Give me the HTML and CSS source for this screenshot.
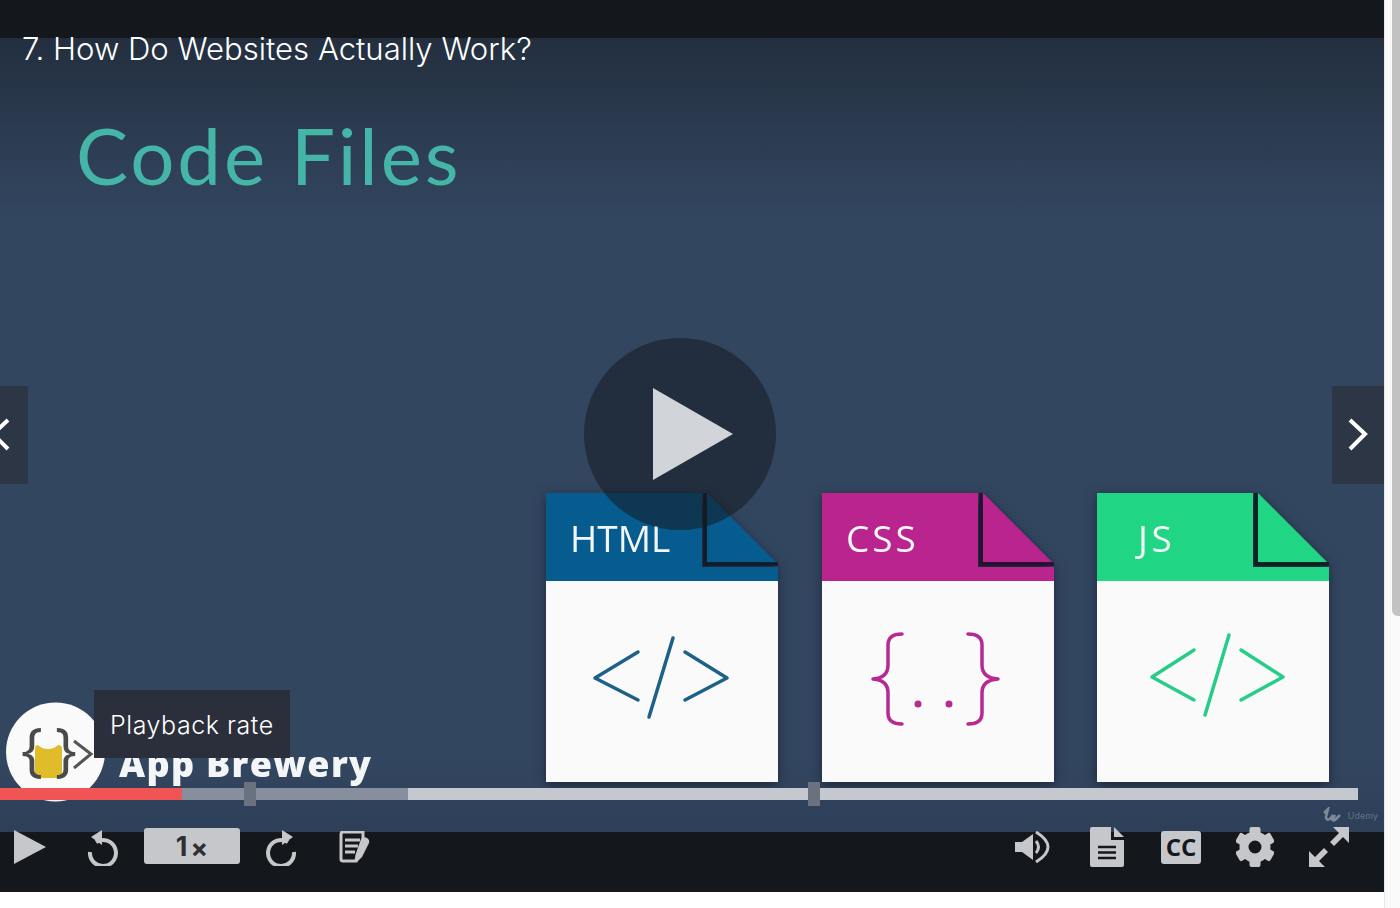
FILE: index.html
```html
<!DOCTYPE html>
<html lang="en">
<head>
	<meta charset="UTF-8">
	<title>How Do Websites Actually Work?</title>
	<link rel="stylesheet" href="styles.css">
</head>
<body>
	<div class="page">
		<div class="main">
			<div class="player">
				<div class="top-bar"></div>
				<div class="stage">
					<div class="slide">
						<div class="slide-title">Code Files</div>
						<div class="slide-bottom">
							<div class="brand">
								<svg class="brand-logo" width="100" height="100" viewBox="0 0 100 100">
									<circle cx="49.500" cy="50" r="49.500" fill="#fafafa"/>
									<path d="M29 47Q29 43 32 43Q36 47 42 47Q48 47 52 43Q56 43 56 47V72Q56 76 52 76H33Q29 76 29 72Z" fill="#dfbd2a"/>
									<text class="logo-sign" x="15" y="68">{</text>
									<text class="logo-sign" x="49" y="68">}</text>
									<path d="M68 39l17 13-17 14" fill="none" stroke="#555" stroke-width="3"/>
								</svg>
								<span class="brand-name">App Brewery</span>
							</div>
							<div class="files">
								<svg class="file" width="232" height="289" viewBox="0 0 232 289">
									<rect y="88" width="232" height="201" fill="#fafafa"/>
									<path d="M0 0H156V74H232V88H0Z" fill="#065c8f"/>
									<path d="M161 0L230 69H161Z" fill="#065c8f"/>
									<path d="M159 0V71H232" fill="none" stroke="#111c2b" stroke-width="3.500"/>
									<text class="file-label" x="24" y="59">HTML</text>
									<path class="code-mark" d="M92 159L49 185L92 207M127 145L103 224M139 159L181 185L139 207" stroke="#1d6088"/>
								</svg>
								<svg class="file" width="232" height="289" viewBox="0 0 232 289">
									<rect y="88" width="232" height="201" fill="#fafafa"/>
									<path d="M0 0H156V74H232V88H0Z" fill="#b9248f"/>
									<path d="M161 0L230 69H161Z" fill="#b9248f"/>
									<path d="M159 0V71H232" fill="none" stroke="#2a1030" stroke-width="3.500"/>
									<text class="file-label file-label-css" x="24" y="59">CSS</text>
									<path class="code-mark" d="M80 141Q66 141 66 152V172Q66 185 51 186Q66 187 66 200V220Q66 231 80 231M146 141Q160 141 160 152V172Q160 185 176 186Q160 187 160 200V220Q160 231 146 231" stroke="#b72a94"/>
									<circle cx="96" cy="211" r="3.500" fill="#b72a94"/>
									<circle cx="127" cy="211" r="3.500" fill="#b72a94"/>
								</svg>
								<svg class="file" width="232" height="289" viewBox="0 0 232 289">
									<rect y="88" width="232" height="201" fill="#fafafa"/>
									<path d="M0 0H156V74H232V88H0Z" fill="#20d685"/>
									<path d="M161 0L230 69H161Z" fill="#20d685"/>
									<path d="M159 0V71H232" fill="none" stroke="#0b2420" stroke-width="3.500"/>
									<text class="file-label file-label-js" x="41" y="59">JS</text>
									<path class="code-mark" d="M97 157L55 184L97 207M132 142L108 222M144 157L186 184L144 207" stroke="#26cc87"/>
								</svg>
							</div>
						</div>
					</div>

					<div class="lecture-title">7. How Do Websites Actually Work?</div>

					<div class="big-play">
						<svg width="80" height="92" viewBox="0 0 80 92"><path d="M0 0L80 46L0 92Z" fill="#d1d4d9"/></svg>
					</div>

					<div class="nav-arrow nav-prev">
						<svg width="28" height="98" viewBox="0 0 28 98"><path d="M8 34L-7 48L8 63" fill="none" stroke="#fff" stroke-width="4"/></svg>
					</div>
					<div class="nav-arrow nav-next">
						<svg width="52" height="98" viewBox="0 0 52 98"><path d="M18 34L33 48L18 63" fill="none" stroke="#fff" stroke-width="4"/></svg>
					</div>

					<div class="tooltip">Playback rate</div>

					<div class="progress">
						<div class="progress-buffer"></div>
						<div class="progress-played"></div>
						<div class="marker marker-a"></div>
						<div class="marker marker-b"></div>
					</div>

					<div class="watermark">
						<svg width="20" height="16" viewBox="0 0 20 16"><path d="M1 6L5 2L3 10Q3 14 7 12L10 8L9 12Q10 15 13 12L17 8M12 8L10 12" fill="none" stroke="#7e8896" stroke-width="2.500"/></svg>
						<span>Udemy</span>
					</div>
				</div>

				<div class="controls">
					<div class="control-group">
						<div class="btn btn-play">
							<svg width="32" height="34" viewBox="0 0 32 34"><path d="M0 0L32 17L0 34Z" fill="#c6c7cb"/></svg>
						</div>
						<div class="btn">
							<svg width="34" height="38" viewBox="0 0 34 38">
								<path d="M10 14A13 13 0 1 1 4 24" fill="none" stroke="#c6c7cb" stroke-width="4"/>
								<path d="M16 2V17L5 9Z" fill="#c6c7cb"/>
							</svg>
						</div>
						<div class="speed"><span class="speed-num">1</span><span class="speed-x">×</span></div>
						<div class="btn">
							<svg width="34" height="38" viewBox="0 0 34 38">
								<path d="M24 14A13 13 0 1 0 30 24" fill="none" stroke="#c6c7cb" stroke-width="4"/>
								<path d="M18 2V17L29 9Z" fill="#c6c7cb"/>
							</svg>
						</div>
						<div class="btn">
							<svg width="32" height="32" viewBox="0 0 32 32">
								<path d="M2 3Q2 1 4 1H24V7L18 24L17 30H4Q2 30 2 28Z" fill="none" stroke="#c6c7cb" stroke-width="3"/>
								<path d="M6 9H21M6 15H19M6 21H16" stroke="#c6c7cb" stroke-width="3"/>
								<path d="M23 8Q25 5 28 7Q31 9 30 12L23 26L18 31L18 23Z" fill="#c6c7cb"/>
							</svg>
						</div>
					</div>
					<div class="control-group">
						<div class="btn">
							<svg width="36" height="32" viewBox="0 0 36 32">
								<path d="M0 11H7L18 3V29L7 21H0Z" fill="#c6c7cb"/>
								<path d="M21 10Q26 16 21 22" fill="none" stroke="#c6c7cb" stroke-width="3"/>
								<path d="M21 1Q45 16 21 31" fill="none" stroke="#c6c7cb" stroke-width="3"/>
							</svg>
						</div>
						<div class="btn">
							<svg width="34" height="40" viewBox="0 0 34 40">
								<path d="M2 0H21V13H34V38Q34 40 32 40H2Q0 40 0 38V2Q0 0 2 0Z" fill="#c6c7cb"/>
								<path d="M24 0L34 10H24Z" fill="#c6c7cb"/>
								<path d="M8 20H26M8 25.500H26M8 31H26" stroke="#14171c" stroke-width="2.500"/>
							</svg>
						</div>
						<div class="btn">
							<svg width="40" height="33" viewBox="0 0 40 33">
								<rect width="40" height="33" rx="3" fill="#c6c7cb"/>
								<text class="cc-text" x="20" y="25">CC</text>
							</svg>
						</div>
						<div class="btn">
							<svg width="38" height="40" viewBox="-19 -20 38 40">
								<rect x="-5.500" y="-20" width="11" height="10" rx="2" fill="#c6c7cb"/>
								<rect x="-5.500" y="-20" width="11" height="10" rx="2" fill="#c6c7cb" transform="rotate(60)"/>
								<rect x="-5.500" y="-20" width="11" height="10" rx="2" fill="#c6c7cb" transform="rotate(120)"/>
								<rect x="-5.500" y="-20" width="11" height="10" rx="2" fill="#c6c7cb" transform="rotate(180)"/>
								<rect x="-5.500" y="-20" width="11" height="10" rx="2" fill="#c6c7cb" transform="rotate(240)"/>
								<rect x="-5.500" y="-20" width="11" height="10" rx="2" fill="#c6c7cb" transform="rotate(300)"/>
								<circle r="11" fill="none" stroke="#c6c7cb" stroke-width="9"/>
							</svg>
						</div>
						<div class="btn">
							<svg width="40" height="40" viewBox="0 0 40 40">
								<path d="M24 0H40V16L34 10L25 19L21 15L30 6Z" fill="#c6c7cb"/>
								<path d="M16 40H0V24L6 30L15 21L19 25L10 34Z" fill="#c6c7cb"/>
							</svg>
						</div>
					</div>
				</div>
			</div>
		</div>
		<div class="scrollbar"><div class="scroll-thumb"></div></div>
	</div>
</body>
</html>
```

FILE: styles.css
```css
*{margin: 0;padding: 0;box-sizing: border-box;}
html,body{height: 100%;overflow: hidden;background: #fff;}
body{font-family: Inter, "Liberation Sans", sans-serif;}

.page{
	display: flex;
	height: 908px;
}
.main{
	flex: 1;
	min-width: 0;
}
.player{
	display: flex;
	flex-direction: column;
	height: 892px;
}
.top-bar{
	height: 38px;
	background: #14171c;
}

/* video */
.stage{
	position: relative;
	flex: 1;
	background: linear-gradient(#232f3f, #334660 180px, #334660 720px, #2e3f58);
}
.slide{
	display: flex;
	flex-direction: column;
	height: 100%;
	padding: 71px 55px 50px 0;
	filter: blur(.7px);
}
.slide-title{
	margin-left: 76px;
	font-family: Lato, sans-serif;
	font-size: 78px;
	font-weight: 400;
	letter-spacing: 2.900px;
	line-height: 92px;
	color: #45b5a8;
}
.slide-bottom{
	display: flex;
	justify-content: space-between;
	align-items: flex-end;
	margin-top: auto;
}
.brand{
	display: flex;
	align-items: flex-end;
	margin: 0 0 -20px 6px;
}
.brand-logo{
	flex: none;
}
.logo-sign{
	font-family: "Open Sans", sans-serif;
	font-size: 58px;
	fill: #4a4a4a;
}
.brand-name{
	margin: 0 0 13px 13px;
	font-family: "Open Sans", sans-serif;
	font-size: 36px;
	font-weight: 800;
	letter-spacing: 1.300px;
	line-height: 50px;
	color: #f4f5f6;
}
.files{
	display: flex;
	gap: 43.500px;
}
.file{
	filter: drop-shadow(0 3px 6px rgba(10,15,25,.55));
}
.file-label{
	font-family: "Open Sans", sans-serif;
	font-size: 37px;
	font-weight: 400;
	fill: #f2f6f8;
}
.file-label-css{
	letter-spacing: 3px;
}
.file-label-js{
	letter-spacing: 3.500px;
}
.code-mark{
	fill: none;
	stroke-width: 3.500;
	stroke-linecap: round;
	stroke-linejoin: round;
}

/* overlays */
.lecture-title{
	position: absolute;
	top: -7px;
	left: 22px;
	font-size: 31.100px;
	font-weight: 300;
	line-height: 36px;
	color: #fff;
}
.big-play{
	position: absolute;
	top: 300px;
	left: 584px;
	display: flex;
	align-items: center;
	justify-content: center;
	width: 192px;
	height: 192px;
	padding-left: 26px;
	border-radius: 50%;
	background: rgba(20,25,33,.55);
}
.nav-arrow{
	position: absolute;
	top: 348px;
	height: 98px;
	background: #2c3645;
	overflow: hidden;
}
.nav-arrow svg{
	display: block;
	overflow: visible;
}
.nav-prev{
	left: 0;
	width: 28px;
}
.nav-next{
	right: 0;
	width: 52px;
}
.tooltip{
	position: absolute;
	top: 652px;
	left: 94px;
	width: 196px;
	padding: 0 16px;
	height: 68px;
	font-size: 25px;
	font-weight: 300;
	letter-spacing: .550px;
	line-height: 70px;
	color: #fff;
	background: #2a2f3b;
}
.progress{
	position: absolute;
	top: 750px;
	left: 0;
	width: 1358px;
	height: 12px;
	background: #c5c8ce;
}
.progress-buffer{
	position: absolute;
	top: 0;
	left: 0;
	width: 408px;
	height: 12px;
	background: #878f9f;
}
.progress-played{
	position: absolute;
	top: 0;
	left: 0;
	width: 182px;
	height: 12px;
	background: #f05455;
}
.marker{
	position: absolute;
	top: -6px;
	width: 12px;
	height: 24px;
	background: #6a7280;
}
.marker-a{left: 244px;}
.marker-b{left: 808px;}
.watermark{
	position: absolute;
	top: 769px;
	right: 6px;
	display: flex;
	align-items: center;
	gap: 5px;
	font-size: 9px;
	color: #66748a;
	filter: blur(.6px);
}

/* control bar */
.controls{
	position: relative;
	display: flex;
	justify-content: space-between;
	align-items: flex-start;
	height: 60px;
	padding-right: 18px;
	background: #14171c;
}
.control-group{
	display: flex;
	align-items: center;
	height: 30px;
}
.btn{
	display: flex;
	align-items: center;
	justify-content: center;
	width: 74px;
	height: 30px;
}
.btn svg{
	flex: none;
}
.btn-play{
	margin-left: -7px;
	margin-right: -1px;
}
.speed{
	display: flex;
	align-items: center;
	justify-content: center;
	flex: none;
	width: 96px;
	height: 36px;
	margin: -2px 4px 0;
	border-radius: 3px;
	font-weight: 700;
	color: #2c2f36;
	background: #c6c7cb;
}
.speed-num{
	font-size: 27px;
}
.speed-x{
	margin: 6px 0 0 3px;
	font-size: 26px;
	line-height: 24px;
}
.cc-text{
	font-family: "Open Sans", sans-serif;
	font-size: 24px;
	font-weight: 700;
	text-anchor: middle;
	fill: #14171c;
}

.scrollbar{
	flex: none;
	width: 16px;
	background: #fafafa;
	border-left: 1px solid #e8e8e8;
	padding-left: 7px;
}
.scroll-thumb{
	height: 616px;
	background: #c2c2c2;
	border-radius: 0 0 0 6px;
}
```
